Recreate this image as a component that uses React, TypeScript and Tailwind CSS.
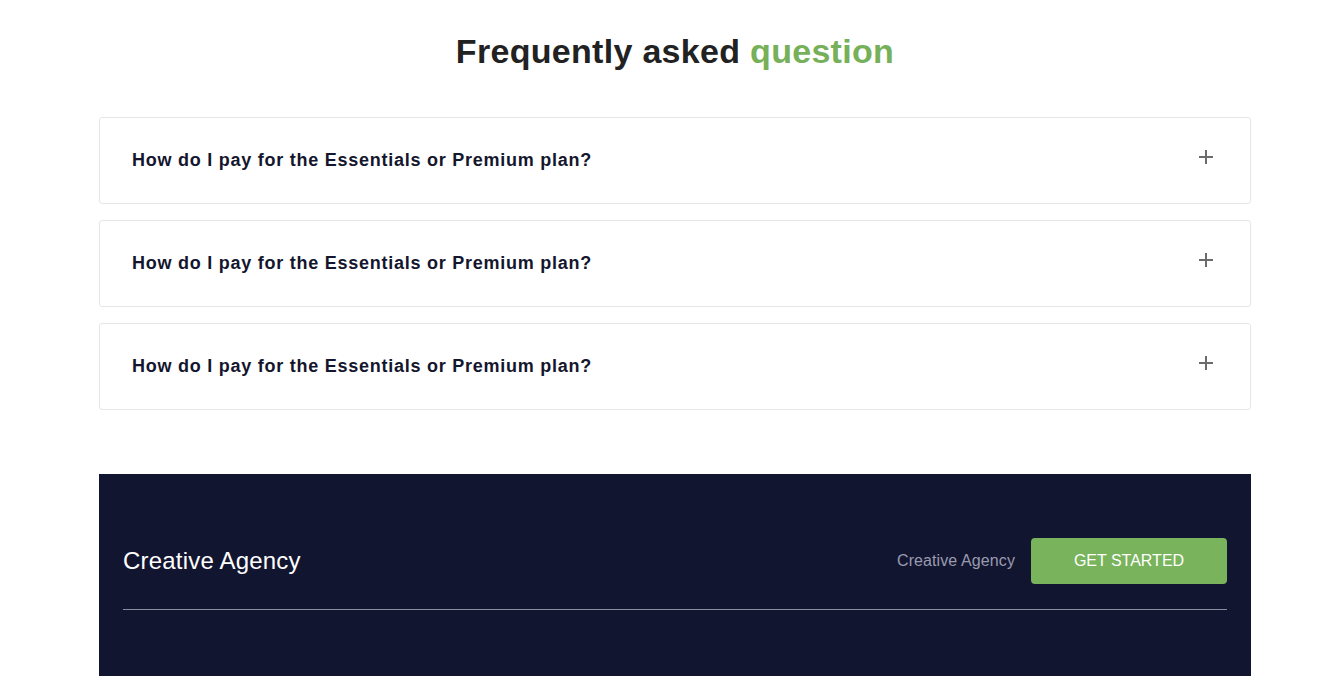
import React, { useState } from 'react';

const FAQS = [
  { id: 1, q: 'How do I pay for the Essentials or Premium plan?', a: 'You can pay with any major credit card or through PayPal.' },
  { id: 2, q: 'How do I pay for the Essentials or Premium plan?', a: 'You can pay with any major credit card or through PayPal.' },
  { id: 3, q: 'How do I pay for the Essentials or Premium plan?', a: 'You can pay with any major credit card or through PayPal.' },
];

const PlusIcon = () => (
  <svg width="16" height="16" viewBox="0 0 16 16" fill="none" stroke="#6b6b6b" strokeWidth="2">
    <path d="M8 1v14M1 8h14" />
  </svg>
);

const App = () => {
  const [open, setOpen] = useState<number | null>(null);

  return (
    <div className="min-h-screen overflow-x-hidden bg-white" style={{ fontFamily: '"Liberation Sans", Arial, sans-serif' }}>
      {/* page is laid out on a 1350px wide canvas */}
      <div className="w-[1350px]">
        {/* FAQ */}
        <section className="pt-[30px]">
          <h2 className="text-center text-[34px] font-bold leading-[42px] tracking-[0.3px] text-[#222222]">
            Frequently asked <span className="text-[#76b05a]">question</span>
          </h2>

          <div className="mx-auto mt-[45px] flex w-[1152px] flex-col gap-4">
            {FAQS.map((item) => (
              <div key={item.id} className="rounded-[3px] border border-[#e6e6e6] bg-white">
                <button
                  onClick={() => setOpen(open === item.id ? null : item.id)}
                  className="flex h-[85px] w-full items-center justify-between pl-8 pr-[36px] text-left"
                >
                  <span className="text-[18px] font-bold tracking-[0.75px] text-[#14162e]">{item.q}</span>
                  <span className="-mt-[7px]"><PlusIcon /></span>
                </button>
                {open === item.id && (
                  <p className="px-8 pb-6 text-[15px] text-[#666]">{item.a}</p>
                )}
              </div>
            ))}
          </div>
        </section>

        {/* Footer */}
        <footer className="mx-auto mt-[64px] w-[1152px] bg-[#12152f] px-6 pt-[64px] pb-10">
          <div className="flex items-center justify-between">
            <h3 className="text-[24px] tracking-[0.2px] text-white">Creative Agency</h3>
            <div className="flex items-center gap-4">
              <span className="text-[16px] tracking-[0.1px] text-[#9a9bb0]">Creative Agency</span>
              <button className="h-[46px] w-[196px] rounded-[4px] bg-[#79b35b] text-[16px] text-white">
                GET STARTED
              </button>
            </div>
          </div>
          <div className="mt-[25px] h-px bg-[#8b8c9c]" />
          <div className="h-[120px]" />
        </footer>
      </div>
    </div>
  );
};

export default App;
